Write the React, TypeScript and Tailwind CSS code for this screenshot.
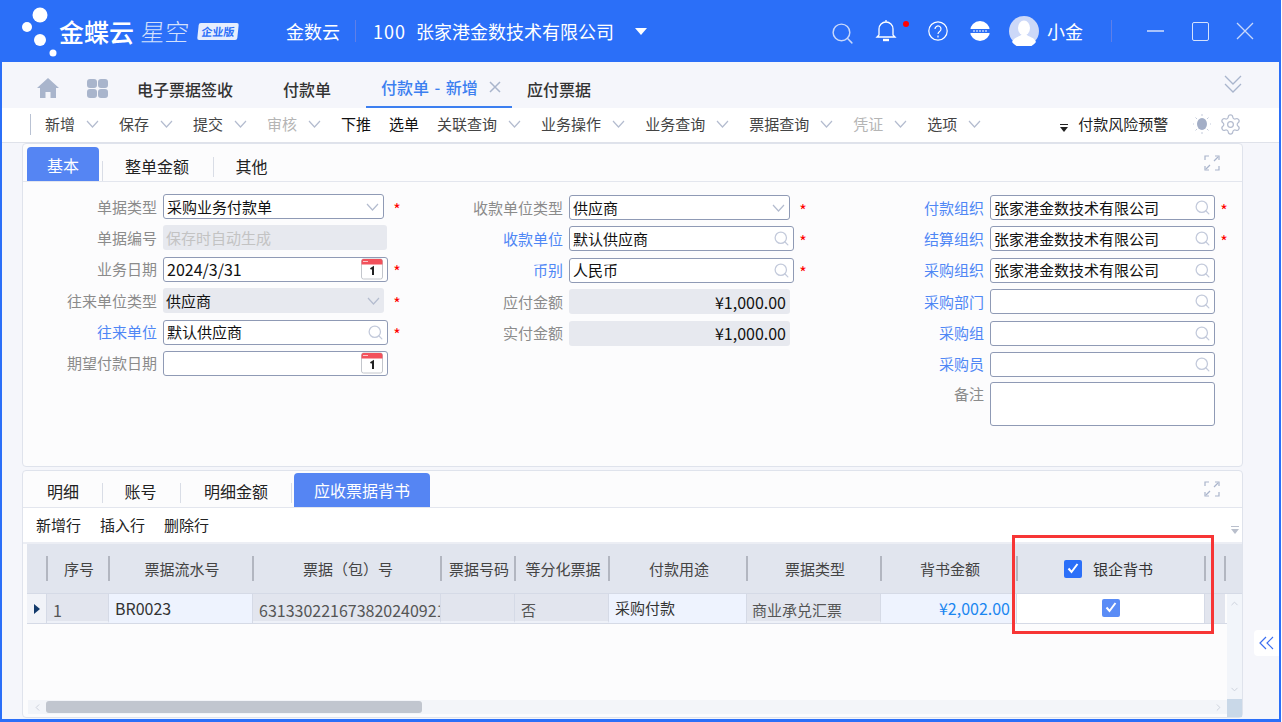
import { ChevronDown, Search, Settings } from "lucide-react";

const FONT = "font-['Noto_Sans_CJK_SC','Noto_Sans',sans-serif]";

const Chevron = ({ className = "text-[#b4bccf]" }: { className?: string }) => (
  <svg width="13" height="8" viewBox="0 0 13 8" className={className}>
    <path d="M1 1l5.5 6L12 1" fill="none" stroke="currentColor" strokeWidth="1.2" />
  </svg>
);

const Expand = () => (
  <svg width="16" height="16" viewBox="0 0 16 16" className="text-[#a9b4cb]" fill="none" stroke="currentColor" strokeWidth="1.2">
    <path d="M1 5V1h4M11 1h4v4M15 11v4h-4M5 15H1v-4" />
    <path d="M10 6l4-4M6 10l-4 4" />
  </svg>
);

const Calendar = () => (
  <svg width="22" height="22" viewBox="0 0 22 22">
    <rect x="0.5" y="1" width="21" height="20" rx="2" fill="#fff" stroke="#c3c6cc" />
    <path d="M0.5 3a2 2 0 0 1 2-2h17a2 2 0 0 1 2 2v3.5h-21z" fill="#f2515b" />
    <rect x="2" y="3" width="5" height="1" fill="#fbc5c8" />
    <path d="M9.5 11l2.5-1.5V17" fill="none" stroke="#222" strokeWidth="2" />
  </svg>
);

const Required = ({ wide }: { wide?: boolean }) => (
  <span className={`w-[14px] ${wide ? "ml-[6px]" : "ml-[2px]"} pt-[4px] text-center text-[16px] leading-[20px] text-[#f00]`}>*</span>
);

type FieldProps = {
  label: string;
  labelWidth: number;
  value?: string;
  link?: boolean;
  required?: boolean;
  kind?: "select" | "search" | "date" | "readonly" | "amount" | "readselect";
  placeholder?: string;
};

const widthClass: Record<number, string> = {
  134: "w-[134px]",
  140: "w-[140px]",
};

const Field = ({ label, labelWidth, value, link, required, kind = "search", placeholder }: FieldProps) => {
  const base = "flex items-center h-[25px] text-[15px] leading-[20px] pl-[3px] pr-[4px] text-[#111] rounded-[3px]";
  const outlined = "border border-[#8f9ab5] bg-white";
  const filled = "bg-[#e7e9ef]";
  return (
    <div className="flex items-center h-[25px]">
      <div className={`${widthClass[labelWidth]} text-right text-[15px] leading-[20px] ${link ? "text-[#4f87f5]" : "text-[#8b8b8b]"}`}>
        {label}
      </div>
      <div className="w-[6px]" />
      {kind === "select" && (
        <div className={`${base} ${outlined} w-[221px] justify-between`}>
          <span>{value}</span>
          <Chevron />
        </div>
      )}
      {kind === "readselect" && (
        <div className={`${base} ${filled} w-[221px] justify-between`}>
          <span>{value}</span>
          <Chevron />
        </div>
      )}
      {kind === "search" && (
        <div className={`${base} ${outlined} w-[225px] justify-between`}>
          <span>{value}</span>
          <Search size={17} strokeWidth={1.8} className="text-[#c3cadb] -mr-[1px]" />
        </div>
      )}
      {kind === "date" && (
        <div className={`${base} ${outlined} w-[225px] justify-between`}>
          <span className="text-[16px]">{value}</span>
          <Calendar />
        </div>
      )}
      {kind === "readonly" && (
        <div className={`${base} ${filled} w-[224px] text-[#c3c3c3]`}>{placeholder}</div>
      )}
      {kind === "amount" && (
        <div className={`${base} ${filled} w-[221px] justify-end text-[16px]`}>{value}</div>
      )}
      {required && <Required wide={kind === "select" || kind === "readselect"} />}
    </div>
  );
};

const toolbarItems = [
  { t: "新增", c: true },
  { t: "保存", c: true },
  { t: "提交", c: true },
  { t: "审核", c: true, off: true },
  { t: "下推", dark: true },
  { t: "选单", dark: true },
  { t: "关联查询", c: true },
  { t: "业务操作", c: true },
  { t: "业务查询", c: true },
  { t: "票据查询", c: true },
  { t: "凭证", c: true, off: true },
  { t: "选项", c: true },
];

const columns = [
  { t: "序号", w: "w-[62px]" },
  { t: "票据流水号", w: "w-[144px]" },
  { t: "票据（包）号", w: "w-[188px]" },
  { t: "票据号码", w: "w-[74px]" },
  { t: "等分化票据", w: "w-[94px]" },
  { t: "付款用途", w: "w-[138px]" },
  { t: "票据类型", w: "w-[134px]" },
  { t: "背书金额", w: "w-[136px]" },
];

const Cell = ({ w, gray, children, className = "" }: { w: string; gray?: boolean; children?: React.ReactNode; className?: string }) => (
  <div className={`${w} h-full shrink-0 border-r border-[#d5dae6] leading-[20px] whitespace-nowrap overflow-hidden ${gray ? "bg-[#e2e5ee] border-b-[2px] border-b-[#eef1f8]" : "bg-[#eef3fe]"} ${className}`}>
    {children}
  </div>
);

const TabDivider = () => (
  <div className="self-center mt-[8px]">
    <div className="w-px h-[20px] bg-[#d9dde6]" />
  </div>
);

const CheckMark = () => (
  <svg width="12" height="11" viewBox="0 0 12 11" fill="none" stroke="#fff" strokeWidth="2">
    <path d="M1.500 5.500l3 3.500 6-8" />
  </svg>
);

const App = () => {
  return (
    <div className={`${FONT} w-[1282px] h-[722px] bg-white overflow-hidden`}>
      <div className="relative w-[1281px] h-[722px] flex flex-col bg-[#f5f6fb] border-l-[2px] border-r-[2px] border-b-[3px] border-[#2b6ff8]">
        {/* header */}
        <div className="h-[62px] shrink-0 bg-[#2b6ff8] flex items-center text-white -ml-[2px] -mr-[2px]">
          <div className="relative w-[62px] h-[62px] shrink-0">
            <svg width="62" height="62" viewBox="0 0 62 62" fill="#fff">
              <ellipse cx="40" cy="15" rx="7.500" ry="7.500" />
              <ellipse cx="27" cy="27" rx="5" ry="5" />
              <ellipse cx="40" cy="40" rx="6" ry="6" />
              <ellipse cx="53" cy="53" rx="3.500" ry="3.500" />
            </svg>
          </div>
          <div className="-ml-[3px] text-[25px] leading-[30px] font-medium w-[82px]">金蝶云</div>
          <div className="text-[24px] leading-[30px] -skew-x-6 text-[#d3e0fc] w-[57px] font-light">星空</div>
          <div className="w-[40px] h-[17px] bg-[#e6eefe] rounded-[2px] -skew-x-6 text-[#2b6ff8] text-[11px] leading-[17px] font-bold text-center">企业版</div>
          <div className="ml-[48px] text-[18px] leading-[24px]">金数云</div>
          <div className="ml-[15px] w-px h-[22px] bg-[#5f7fe8]" />
          <div className="ml-[17px] text-[18px] leading-[24px] whitespace-pre">
            <span className="tracking-[1px]">100</span>
            <span className="ml-[10px]">张家港金数技术有限公司</span>
          </div>
          <svg width="12" height="7" viewBox="0 0 12 7" className="ml-[21px]" fill="#fff">
            <path d="M0 0h12L6 7z" />
          </svg>
          <Search size={25} strokeWidth={1.4} className="ml-[183px] mt-[4px] text-[#c8d8fb]" />
          <div className="relative ml-[20px] w-[22px] h-[24px]">
            <svg width="22" height="24" viewBox="0 0 22 24" fill="none" stroke="#fff" strokeWidth="1.3">
              <path d="M11 1v2M4 16V10a7 7 0 0 1 14 0v6l2 2H2z" />
              <path d="M8 21h6" strokeWidth="2.400" />
            </svg>
            <span className="absolute top-[2px] -right-[12px] w-[6px] h-[6px] rounded-full bg-[#f00]" />
          </div>
          <svg width="20" height="20" viewBox="0 0 20 20" className="ml-[31px]" fill="none" stroke="#fff" strokeWidth="1.2">
            <circle cx="10" cy="10" r="9.200" />
            <path d="M7 8a3 3 0 1 1 4.600 2.500c-1 .7-1.600 1.200-1.600 2.500M10 14.500v2" />
          </svg>
          <svg width="20" height="20" viewBox="0 0 20 20" className="ml-[22px]">
            <circle cx="10" cy="10" r="10" fill="#fff" />
            <rect x="0" y="8" width="20" height="4" fill="#2b6ff8" />
            <path d="M3 10h14" stroke="#fff" strokeWidth="1" strokeDasharray="2 1" />
          </svg>
          <svg width="30" height="30" viewBox="0 0 30 30" className="ml-[19px]">
            <circle cx="15" cy="15" r="15" fill="#ccd8f8" />
            <ellipse cx="15" cy="12" rx="6" ry="7.500" fill="#fff" />
            <path d="M3 26c2-5 7-5 9-7h6c2 2 7 2 9 7a15 15 0 0 1-24 0z" fill="#fff" />
          </svg>
          <div className="ml-[8px] text-[18px] leading-[24px]">小金</div>
          <div className="ml-[28px] w-px h-[22px] bg-[#5f7fe8]" />
          <div className="ml-[35px] w-[17px] h-[2px] bg-[#a9c3fb]" />
          <div className="ml-[28px] w-[17px] h-[19px] rounded-[2px] border-[1.5px] border-[#d5e2fd]" />
          <svg width="18" height="18" viewBox="0 0 18 18" className="ml-[27px]" fill="none" stroke="#c8d8fb" strokeWidth="1.300">
            <path d="M1 1l16 16M17 1L1 17" />
          </svg>
        </div>

        {/* tabs */}
        <div className="h-[46px] shrink-0 flex items-end pl-[35px]">
          <div className="h-[46px] flex items-center pt-[6px] w-[50px]">
            <svg width="22" height="20" viewBox="0 0 22 20" fill="#a9b5cc">
              <path d="M11 0L0 10h3v10h5.500v-6h5v6H19V10h3z" />
            </svg>
          </div>
          <div className="h-[46px] flex items-center pt-[6px] w-[50px]">
            <div className="grid grid-cols-2 gap-[1px]">
              <span className="w-[10px] h-[9px] rounded-[3px] bg-[#a9b5cc]" />
              <span className="w-[10px] h-[9px] rounded-[3px] bg-[#a9b5cc]" />
              <span className="w-[10px] h-[9px] rounded-[3px] bg-[#a9b5cc]" />
              <span className="w-[10px] h-[9px] rounded-[3px] bg-[#a9b5cc]" />
            </div>
          </div>
          <div className="h-[46px] w-[146px] flex items-center pt-[7px] text-[16px] leading-[22px] font-medium text-[#333]">电子票据签收</div>
          <div className="h-[46px] w-[83px] flex items-center pt-[7px] text-[16px] leading-[22px] font-medium text-[#333]">付款单</div>
          <div className="h-[46px] w-[146px] pl-[15px] flex items-center pt-[6px] text-[16px] leading-[22px] font-medium text-[#3c7ff0] border-b-[2px] border-[#3c7ff0]">
            <span>付款单<span className="mx-[5.500px]">-</span>新增</span>
            <svg width="12" height="12" viewBox="0 0 12 12" className="ml-[11px]" fill="none" stroke="#a9b5cc" strokeWidth="1.500">
              <path d="M1 1l10 10M11 1L1 11" />
            </svg>
          </div>
          <div className="h-[46px] ml-[15px] flex items-center pt-[7px] text-[16px] leading-[22px] font-medium text-[#333]">应付票据</div>
          <svg width="18" height="18" viewBox="0 0 18 18" className="ml-auto mr-[37px] mb-[15px]" fill="none" stroke="#a9b5cc" strokeWidth="1.300">
            <path d="M1 1l8 8 8-8M1 9l8 8 8-8" />
          </svg>
        </div>

        {/* toolbar */}
        <div className="h-[35px] shrink-0 bg-white flex items-center pl-[28px] pb-[2px] border-b border-[#dfe2ea]">
          <div className="w-px h-[21px] bg-[#b9c2d3] mr-[14px]" />
          {toolbarItems.map((it) => (
            <div key={it.t} className={`flex items-center ${it.c ? "mr-[20px]" : "mr-[18px]"}`}>
              <span className={`text-[15px] leading-[20px] ${it.off ? "text-[#b5b5b5]" : it.dark ? "text-[#111]" : "text-[#444]"}`}>{it.t}</span>
              {it.c && (
                <span className="ml-[11px] flex">
                  <Chevron />
                </span>
              )}
            </div>
          ))}
          <svg width="10" height="10" viewBox="0 0 10 10" className="ml-[58px] mt-[8px]" fill="#222">
            <rect x="1" y="1" width="8" height="1" />
            <path d="M1 4h8L5 9z" />
          </svg>
          <span className="ml-[9px] text-[15px] leading-[20px] text-[#222]">付款风险预警</span>
          <svg width="18" height="20" viewBox="0 0 18 20" className="ml-[25px]" fill="none" stroke="#c4cbdb" strokeWidth="1">
            <ellipse cx="9" cy="10" rx="5" ry="6" fill="#a3aec6" stroke="none" />
            <path d="M9 0v2M9 18v2M1 10H0M18 10h-1M2.500 3.500l1.500 1.500M15.500 3.500L14 5M2.500 16.500L4 15M15.500 16.500L14 15" />
          </svg>
          <Settings size={23} strokeWidth={1.3} className="ml-[8px] text-[#b4bccf]" />
        </div>

        {/* form panel */}
        <div className="ml-[20px] w-[1221px] h-[324px] shrink-0 bg-[#fcfcfd] border border-[#dfe3ec] rounded-[4px] flex flex-col">
          <div className="h-[38px] shrink-0 flex items-end pl-[4px] border-b border-[#e3e6ee]">
            <div className="w-[72px] h-[34px] rounded-t-[4px] bg-[#5585f3] text-white text-[16px] leading-[36px] text-center">基本</div>
            <div className="ml-[3px]"><TabDivider /></div>
            <div className="w-[110px] h-[33px] pr-[2px] text-[16px] leading-[37px] text-[#222] text-center">整单金额</div>
            <TabDivider />
            <div className="w-[75px] h-[33px] text-[16px] leading-[37px] text-[#222] text-center">其他</div>
            <div className="ml-auto mr-[22px] self-center">
              <Expand />
            </div>
          </div>
          <div className="flex pt-[12px]">
            <div className="flex flex-col gap-[6.400px] w-[400px]">
              <Field label="单据类型" labelWidth={134} kind="select" value="采购业务付款单" required />
              <Field label="单据编号" labelWidth={134} kind="readonly" placeholder="保存时自动生成" />
              <Field label="业务日期" labelWidth={134} kind="date" value="2024/3/31" required />
              <Field label="往来单位类型" labelWidth={134} kind="readselect" value="供应商" required />
              <Field label="往来单位" labelWidth={134} link value="默认供应商" required />
              <Field label="期望付款日期" labelWidth={134} kind="date" />
            </div>
            <div className="flex flex-col gap-[6.400px] w-[421px] pt-[1px]">
              <Field label="收款单位类型" labelWidth={140} kind="select" value="供应商" required />
              <Field label="收款单位" labelWidth={140} link value="默认供应商" required />
              <Field label="币别" labelWidth={140} link value="人民币" required />
              <Field label="应付金额" labelWidth={140} kind="amount" value="¥1,000.00" />
              <Field label="实付金额" labelWidth={140} kind="amount" value="¥1,000.00" />
            </div>
            <div className="flex flex-col gap-[6.400px] pt-[1px]">
              <Field label="付款组织" labelWidth={140} link value="张家港金数技术有限公司" required />
              <Field label="结算组织" labelWidth={140} link value="张家港金数技术有限公司" required />
              <Field label="采购组织" labelWidth={140} link value="张家港金数技术有限公司" />
              <Field label="采购部门" labelWidth={140} link />
              <Field label="采购组" labelWidth={140} link />
              <Field label="采购员" labelWidth={140} link />
              <div className="flex">
                <div className="w-[140px] text-right text-[15px] leading-[20px] text-[#8b8b8b] pt-[1px]">备注</div>
                <div className="w-[6px]" />
                <div className="w-[225px] h-[44px] -mt-[1px] bg-white border border-[#8f9ab5] rounded-[3px]" />
              </div>
            </div>
          </div>
        </div>

        {/* detail panel */}
        <div className="mt-[3px] ml-[20px] w-[1221px] h-[248px] shrink-0 bg-[#fcfcfd] border border-[#dfe3ec] rounded-[4px] flex flex-col">
          <div className="h-[37px] shrink-0 flex items-end pl-[4px] border-b border-[#e3e6ee]">
            <div className="w-[75px] h-[33px] pr-[3px] text-[16px] leading-[35px] text-[#222] text-center">明细</div>
            <TabDivider />
            <div className="w-[77px] h-[33px] pr-[2px] text-[16px] leading-[35px] text-[#222] text-center">账号</div>
            <TabDivider />
            <div className="w-[110px] h-[33px] text-[16px] leading-[35px] text-[#222] text-center">明细金额</div>
            <TabDivider />
            <div className="ml-[2px] w-[136px] h-[34px] rounded-t-[4px] bg-[#5585f3] text-white text-[16px] leading-[34px] text-center">应收票据背书</div>
            <div className="ml-auto mr-[22px] self-center">
              <Expand />
            </div>
          </div>
          <div className="relative h-[36px] shrink-0 bg-white flex items-center gap-[19px] pl-[13px] text-[15px] leading-[20px] text-[#222] border-b-[2px] border-[#eceef4]">
            <span>新增行</span>
            <span>插入行</span>
            <span>删除行</span>
            <svg width="8" height="10" viewBox="0 0 8 10" className="absolute right-[3px] top-[18px]" fill="#b9bfcc">
              <rect y="0" width="8" height="1" />
              <path d="M0 3h8L4 8z" />
            </svg>
          </div>
          {/* table head */}
          <div className="ml-[4px] h-[50px] shrink-0 flex items-center bg-[#e1e5ee] border-b border-[#d5dae6] pl-[19px]">
            <div className="w-[2px] h-[25px] bg-[#b2b6c0]" />
            {columns.map((c) => (
              <div key={c.t} className={`${c.w} h-[25px] pl-[2px] flex items-center justify-center border-r-[2px] border-[#b2b6c0] text-[15px] leading-[20px] text-[#444] whitespace-nowrap`}>
                {c.t}
              </div>
            ))}
            <div className="w-[188px] h-[25px] flex items-center justify-center border-r-[2px] border-[#b2b6c0] text-[15px] leading-[20px] text-[#333]">
              <span className="w-[18px] h-[18px] -ml-[5px] rounded-[2px] bg-[#2b6ff8] flex items-center justify-center mr-[11px]">
                <CheckMark />
              </span>
              银企背书
            </div>
            <div className="w-[20px] h-[25px] border-r-[2px] border-[#b2b6c0]" />
          </div>
          {/* table row */}
          <div className="ml-[4px] h-[30px] shrink-0 flex border-b border-[#d5dae6] text-[#222]">
            <div className="w-[20px] h-full shrink-0 bg-[#f1f3f8] border-r border-[#d5dae6] flex items-center justify-center">
              <svg width="6" height="10" viewBox="0 0 6 10" fill="#123a6b"><path d="M0 0l6 5-6 5z" /></svg>
            </div>
            <Cell w="w-[62px]" gray className="pl-[6px] pt-[6px] text-[16px] text-[#555]">1</Cell>
            <Cell w="w-[144px]" className="pl-[6px] pt-[4px] text-[16px] text-[#333]">BR0023</Cell>
            <Cell w="w-[188px]" gray className="pl-[6px] pt-[6px] text-[16px] text-[#555]">631330221673820240921</Cell>
            <Cell w="w-[74px]" gray />
            <Cell w="w-[94px]" gray className="pl-[6px] pt-[6px] text-[15px] text-[#555]">否</Cell>
            <Cell w="w-[138px]" className="pl-[6px] pt-[4px] text-[15px] text-[#333]">采购付款</Cell>
            <Cell w="w-[134px]" gray className="pl-[5px] pt-[6px] text-[15px] text-[#555]">商业承兑汇票</Cell>
            <Cell w="w-[136px]" className="pr-[6px] pt-[4px] text-right text-[16px] text-[#1a86f0]">¥2,002.00</Cell>
            <div className="w-[188px] h-full shrink-0 bg-white border-r border-[#d5dae6] flex items-center justify-center">
              <span className="w-[18px] h-[18px] rounded-[2px] bg-[#5a8cf6] flex items-center justify-center -mt-[2px]">
                <CheckMark />
              </span>
            </div>
            <div className="w-[20px] h-full shrink-0 bg-[#e2e5ee]" />
          </div>
          {/* table scroll area */}
          <div className="flex-1 flex min-h-0">
            <div className="flex-1 flex flex-col justify-end">
              <div className="ml-[5px] h-[14px] mb-[3px] flex items-center bg-[#f3f5f9]">
                <div className="w-[18px] flex justify-center text-[#c9cfda]">
                  <ChevronDown size={11} className="rotate-90" />
                </div>
                <div className="w-[376px] h-[12px] rounded-[3px] bg-[#c1c6cf]" />
                <div className="ml-auto mr-[3px] text-[#c9cfda]">
                  <ChevronDown size={11} className="-rotate-90" />
                </div>
              </div>
            </div>
            <div className="w-[15px] flex flex-col -mt-[30px] bg-[#f2f5fa] items-center">
              <ChevronDown size={11} className="mt-[4px] rotate-180 text-[#c9cfda]" />
              <div className="flex-1" />
              <ChevronDown size={11} className="mb-[4px] text-[#c9cfda]" />
              <div className="w-full h-[18px] bg-[#c9d8e8]" />
            </div>
          </div>
        </div>

        {/* red annotation */}
        <div className="absolute left-[1010px] top-[535px] w-[202px] h-[99px] border-[3px] border-[#f73535]" />
        {/* collapse handle */}
        <div className="absolute left-[1252px] top-[630px] w-[25px] h-[26px] bg-white rounded-l-[4px] flex items-center justify-center">
          <svg width="15" height="14" viewBox="0 0 15 14" fill="none" stroke="#3c6ff0" strokeWidth="1.200">
            <path d="M7 1L1 7l6 6M14 1L8 7l6 6" />
          </svg>
        </div>
      </div>
    </div>
  );
};

export default App;
